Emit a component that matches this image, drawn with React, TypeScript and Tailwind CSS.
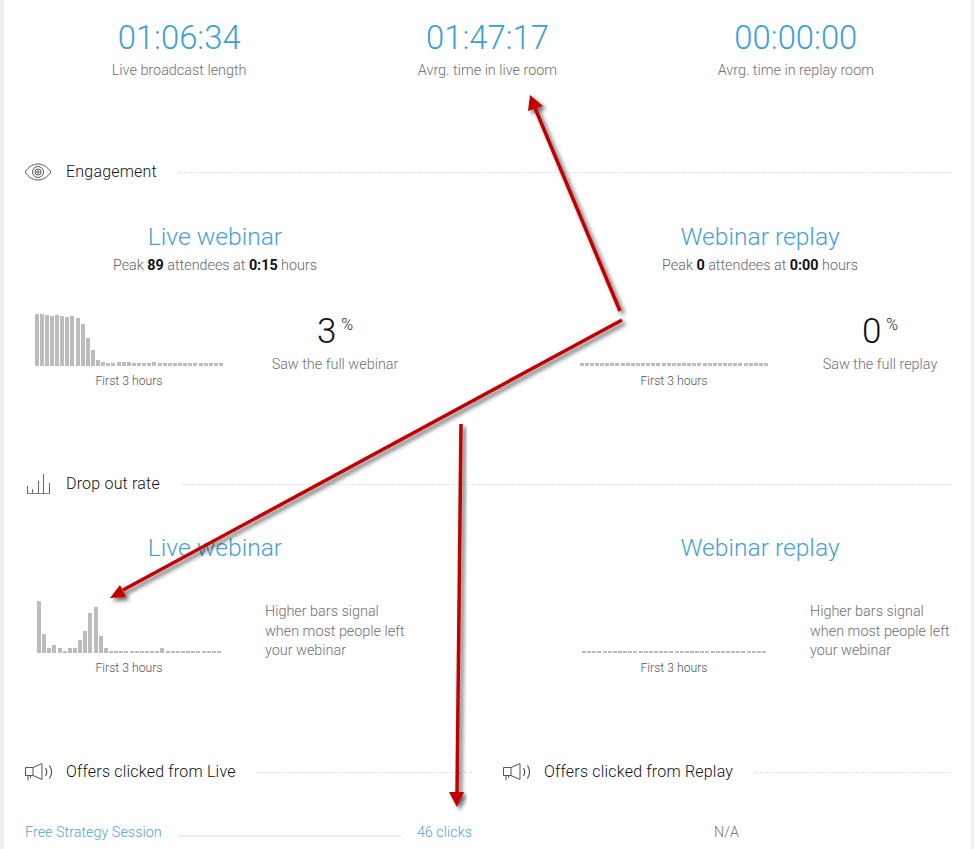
const font = { fontFamily: '"Roboto", "Liberation Sans", sans-serif' };

const engagement = [52,52,51,50,51,50,49,50,48,42,28,16,6,4,3,3,4,4,4,3,3,3,3,4,3,3,3,3,3,3,3,3,3,3,3,3,3];
const dropout = [52,19,5,8,5,2,5,5,13,22,40,46,17,5,2,2,2,2,2,2,2,2,2,2,5,2,2,2,2,2,2,2,2,2,2,2];
const flat = Array.from({ length: 37 }, () => 3);
const flatDrop = Array.from({ length: 36 }, () => 2);

function Bars({ data, width }: { data: number[]; width: string }) {
  return (
    <div className={`flex items-end justify-between h-[52px] ${width}`}>
      {data.map((h, i) => (
        <div key={i} className="w-[4px] bg-[#bcbcbc]" style={{ height: h }} />
      ))}
    </div>
  );
}

function Eye() {
  return (
    <svg width="28" height="18" viewBox="1 0 28 18" fill="none" stroke="#555" strokeWidth="1">
      <path d="M1 9 C5 3.5 9 1 14 1 C19 1 23 3.5 27 9 C23 14.5 19 17 14 17 C9 17 5 14.5 1 9 Z" />
      <circle cx="14" cy="9" r="5.5" />
      <circle cx="14" cy="9" r="3" />
      <circle cx="14" cy="9" r="1.2" />
    </svg>
  );
}

function BarsIcon() {
  return (
    <svg width="26" height="22" viewBox="0 0 26 22" fill="none" stroke="#6b6478" strokeWidth="1">
      <path d="M2 20.5 H25" stroke="#888" />
      <path d="M2.5 21 V13 M7.5 21 V16 M13.5 21 V8 M18.5 21 V1 M24.5 21 V10" />
    </svg>
  );
}

function Megaphone() {
  return (
    <svg width="28" height="18" viewBox="0 0 28 18" fill="none" stroke="#555" strokeWidth="1">
      <path d="M0.5 4.5 H8 L17 0.5 V16.5 L8 12.5 H0.5 Z" />
      <path d="M8 4.5 V12.5 M3 12.5 V17.5 M5.5 12.5 V15" />
      <path d="M20.5 5 C22 7.5 22 10.5 20.5 13" strokeWidth="1.2" />
      <path d="M24.5 2.5 C27 6.5 27 11.5 24.5 15.5" strokeWidth="1.2" />
    </svg>
  );
}

function SectionHead({ icon, label }: { icon: React.ReactNode; label: string }) {
  return (
    <div className="flex items-center h-[24px]">
      <div className="w-[41px] shrink-0 flex items-center">{icon}</div>
      <span className="text-[16px] font-light text-[#111] whitespace-nowrap tracking-[0.2px]">{label}</span>
      <div className="flex-1 border-t border-dashed border-[#dfe3e3] ml-[22px]" />
    </div>
  );
}

function Stat({ value, label }: { value: string; label: string }) {
  return (
    <div className="flex flex-col items-center">
      <div className="text-[32.8px] leading-[38px] font-light text-[#3d9fd6]">{value}</div>
      <div className="text-[14.4px] leading-[20px] mt-[4px] font-light text-[#707070]">{label}</div>
    </div>
  );
}

function Heading({ children }: { children: React.ReactNode }) {
  return <div className="text-[24.6px] leading-[30px] font-light text-[#4a9fd4] text-center">{children}</div>;
}

function Caption() {
  return <div className="text-[12.2px] leading-[16px] font-light text-[#555] text-center mt-[7px]">First 3 hours</div>;
}

function Percent({ n, label }: { n: string; label: string }) {
  return (
    <div className="w-[140px] flex flex-col items-center">
      <div className="flex items-start justify-center -mt-[1px]">
        <span className="text-[35px] leading-[38px] font-light text-[#111]">{n}</span>
        <span className="ml-[5px] mt-[4px] text-[16px] leading-[16px] font-light text-[#222]">%</span>
      </div>
      <div className="text-[14.4px] leading-[20px] font-light text-[#707070] mt-[4px] whitespace-nowrap">{label}</div>
    </div>
  );
}

function Note() {
  return (
    <div className="w-[140px] mt-[1px] text-[14.4px] leading-[19.5px] font-light text-[#707070] whitespace-nowrap">
      Higher bars signal<br />when most people left<br />your webinar
    </div>
  );
}

function Peak({ count, time }: { count: string; time: string }) {
  return (
    <div className="text-[14.35px] leading-[20px] font-light text-[#666] text-center mt-[4px]">
      Peak <b className="font-bold text-[#111]">{count}</b> attendees at <b className="font-bold text-[#111]">{time}</b> hours
    </div>
  );
}

export default function App() {
  return (
    <div style={font} className="relative w-[974px] h-[849px] overflow-hidden bg-white border-l-[4px] border-r-[3px] border-[#efefef]">
      <div className="px-[21px] pt-[19px]">
        <div className="grid grid-cols-3">
          <Stat value="01:06:34" label="Live broadcast length" />
          <Stat value="01:47:17" label="Avrg. time in live room" />
          <Stat value="00:00:00" label="Avrg. time in replay room" />
        </div>

        <div className="mt-[79px]">
          <SectionHead icon={<Eye />} label="Engagement" />
        </div>

        <div className="flex justify-between mt-[38px]">
          <div className="w-[380px]">
            <Heading>Live webinar</Heading>
            <Peak count="89" time="0:15" />
            <div className="flex justify-between mt-[38px]">
              <div className="w-[208px] flex flex-col items-center">
                <Bars data={engagement} width="w-[189px]" />
                <Caption />
              </div>
              <Percent n="3" label="Saw the full webinar" />
            </div>
          </div>
          <div className="w-[380px]">
            <Heading>Webinar replay</Heading>
            <Peak count="0" time="0:00" />
            <div className="flex justify-between mt-[38px]">
              <div className="w-[208px] flex flex-col items-center">
                <Bars data={flat} width="w-[189px]" />
                <Caption />
              </div>
              <Percent n="0" label="Saw the full replay" />
            </div>
          </div>
        </div>

        <div className="mt-[83px]">
          <SectionHead icon={<BarsIcon />} label="Drop out rate" />
        </div>

        <div className="flex justify-between mt-[37px]">
          <div className="w-[380px]">
            <Heading>Live webinar</Heading>
            <div className="flex justify-between mt-[38px]">
              <div className="w-[208px] flex flex-col items-center">
                <Bars data={dropout} width="w-[184px]" />
                <Caption />
              </div>
              <Note />
            </div>
          </div>
          <div className="w-[380px]">
            <Heading>Webinar replay</Heading>
            <div className="flex justify-between mt-[38px]">
              <div className="w-[208px] flex flex-col items-center">
                <Bars data={flatDrop} width="w-[184px]" />
                <Caption />
              </div>
              <Note />
            </div>
          </div>
        </div>

        <div className="flex justify-between mt-[84px]">
          <div className="w-[447px]">
            <SectionHead icon={<Megaphone />} label="Offers clicked from Live" />
            <div className="flex items-center mt-[39px] text-[14.4px] leading-[20px] font-light text-[#5b9fd4]">
              <span>Free Strategy Session</span>
              <div className="flex-1 mx-[16px] mt-[6px] h-[2px] bg-[#e8edf0]" />
              <span>46 clicks</span>
            </div>
          </div>
          <div className="w-[447px]">
            <SectionHead icon={<Megaphone />} label="Offers clicked from Replay" />
            <div className="mt-[39px] text-[14.4px] leading-[20px] font-light text-[#777] text-center">N/A</div>
          </div>
        </div>
      </div>

      <svg className="absolute left-[-4px] top-0 pointer-events-none" width="974" height="849" viewBox="0 0 974 849" fill="none">
        <defs>
          <filter id="sh" x="-20%" y="-20%" width="140%" height="140%">
            <feDropShadow dx="3" dy="3" stdDeviation="2" floodColor="#000" floodOpacity="0.6" />
          </filter>
        </defs>
        <g filter="url(#sh)">
          <path d="M620 311 L535 108" stroke="#c00000" strokeWidth="3.5" />
          <path d="M530 95 L543 106 L528 111 Z" fill="#c00000" />
        </g>
        <g filter="url(#sh)">
          <path d="M622 320 L123 590" stroke="#c00000" strokeWidth="3.5" />
          <path d="M110 598 L120 585 L126 597 Z" fill="#c00000" />
        </g>
        <g filter="url(#sh)">
          <path d="M461 424 L457 795" stroke="#c00000" strokeWidth="3.5" />
          <path d="M449 792 L464 792 L457 807 Z" fill="#c00000" />
        </g>
      </svg>
    </div>
  );
}
